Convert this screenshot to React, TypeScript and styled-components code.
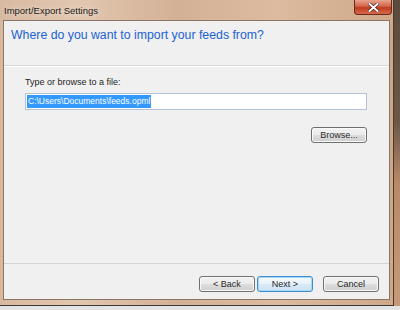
import React from "react";
import styled, { createGlobalStyle } from "styled-components";

const GlobalStyle = createGlobalStyle`
  html, body {
    margin: 0;
    padding: 0;
  }
  body {
    font-family: "Liberation Sans", Arial, sans-serif;
  }
`;

const Page = styled.div`
  width: 400px;
  height: 310px;
  display: flex;
  flex-direction: column;
  background: #e9e9ea;
  overflow: hidden;
`;

const Row = styled.div`
  display: flex;
  height: 306px;
`;

const Backdrop = styled.div`
  flex: 1;
  background: linear-gradient(180deg, #5a4a3e 0%, #6d5848 40%, #b8896a 60%, #c49a7a 100%);
`;

const Window = styled.div`
  width: 394px;
  height: 306px;
  display: flex;
  flex-direction: column;
  box-sizing: border-box;
  padding: 0 3px 5px 3px;
  border-right: 1px solid #4a3a30;
  border-bottom: 1px solid #3a3a3a;
  background: linear-gradient(
      90deg,
      #d8b9a0 0%,
      #e2c7b0 20%,
      #d3b196 45%,
      #dcbba0 70%,
      #cfa888 100%
    );
`;

const TitleBar = styled.div`
  height: 20px;
  display: flex;
  align-items: center;
  justify-content: space-between;
`;

const Title = styled.span`
  font-family: "Liberation Sans", Arial, sans-serif;
  font-size: 9.5px;
  color: #1c1c1c;
  padding-left: 1px;
  margin-top: 1px;
  text-shadow: 0 0 6px rgba(255, 255, 255, 0.8);
`;

const CloseButton = styled.div`
  width: 38px;
  height: 15px;
  margin-top: -5px;
  margin-right: -2px;
  box-sizing: border-box;
  border: 1px solid #6b2a1c;
  border-top: none;
  border-radius: 0 0 4px 4px;
  background: linear-gradient(180deg, #e8a48e 0%, #d2644a 45%, #bf3b20 55%, #d9694c 100%);
  display: flex;
  align-items: center;
  justify-content: center;
`;

const Content = styled.div`
  flex: 1;
  display: flex;
  flex-direction: column;
  background: #f0f0f0;
  border: 1px solid #8d7566;
`;

const Header = styled.div`
  height: 45px;
  box-sizing: border-box;
  padding: 6px 0 0 7px;
  border-bottom: 1px solid #d5d5d5;
`;

const Heading = styled.h1`
  margin: 0;
  font-family: "Liberation Sans", Arial, sans-serif;
  font-weight: normal;
  font-size: 12.3px;
  line-height: 16px;
  color: #1c63d2;
`;

const Body = styled.div`
  flex: 1;
  display: flex;
  flex-direction: column;
  padding: 9px 22px 0 21px;
  border-top: 1px solid #ffffff;
`;

const Label = styled.label`
  font-family: "Liberation Sans", Arial, sans-serif;
  font-size: 9px;
  color: #1e1e1e;
  line-height: 12px;
`;

const PathBox = styled.div`
  margin-top: 5px;
  height: 17px;
  box-sizing: border-box;
  border: 1px solid #b5c3d6;
  background: #ffffff;
  display: flex;
  align-items: center;
  padding-left: 1px;
`;

const Selected = styled.span`
  background: #3399ff;
  color: #ffffff;
  font-family: "Liberation Sans", Arial, sans-serif;
  font-size: 8.5px;
  line-height: 13px;
  padding: 0 1px;
`;

const BrowseRow = styled.div`
  display: flex;
  justify-content: flex-end;
  margin-top: 17px;
`;

const Button = styled.button<{ $default?: boolean }>`
  width: 56px;
  height: 16px;
  padding: 0;
  box-sizing: border-box;
  border: 1px solid ${(p) => (p.$default ? "#3c8ccf" : "#707070")};
  border-radius: 3px;
  background: ${(p) =>
    p.$default
      ? "linear-gradient(180deg, #f4f9fd 0%, #e8f2fa 50%, #d9e9f6 52%, #cfe3f3 100%)"
      : "linear-gradient(180deg, #f2f2f2 0%, #ebebeb 50%, #dddddd 52%, #cfcfcf 100%)"};
  box-shadow: inset 0 0 0 1px ${(p) => (p.$default ? "#a8d8f5" : "#fafafa")};
  font-family: "Liberation Sans", Arial, sans-serif;
  font-size: 9px;
  color: #2a2a2a;
  line-height: 14px;
`;

const Footer = styled.div`
  height: 36px;
  display: flex;
  justify-content: flex-end;
  align-items: flex-start;
  padding: 12px 10px 0 0;
  box-sizing: border-box;
  border-top: 1px solid #d5d5d5;
`;

const FooterGap = styled.div<{ $w: number }>`
  width: ${(p) => p.$w}px;
`;

const BottomStrip = styled.div`
  flex: 1;
  background: #e4e4e4;
`;

export default function App() {
  return (
    <Page>
      <GlobalStyle />
      <Row>
        <Window>
          <TitleBar>
            <Title>Import/Export Settings</Title>
            <CloseButton>
              <svg width="11" height="9" viewBox="0 0 11 9">
                <path
                  d="M1.5 1 L9.5 8 M9.5 1 L1.5 8"
                  stroke="#3a1a10"
                  strokeWidth="3.2"
                  strokeLinecap="square"
                />
                <path
                  d="M1.5 1 L9.5 8 M9.5 1 L1.5 8"
                  stroke="#ffffff"
                  strokeWidth="2"
                  strokeLinecap="square"
                />
              </svg>
            </CloseButton>
          </TitleBar>
          <Content>
            <Header>
              <Heading>Where do you want to import your feeds from?</Heading>
            </Header>
            <Body>
              <Label>Type or browse to a file:</Label>
              <PathBox>
                <Selected>C:\Users\Documents\feeds.opml</Selected>
              </PathBox>
              <BrowseRow>
                <Button>Browse...</Button>
              </BrowseRow>
            </Body>
            <Footer>
              <Button>&lt; Back</Button>
              <FooterGap $w={2} />
              <Button $default>Next &gt;</Button>
              <FooterGap $w={10} />
              <Button>Cancel</Button>
            </Footer>
          </Content>
        </Window>
        <Backdrop />
      </Row>
      <BottomStrip />
    </Page>
  );
}
